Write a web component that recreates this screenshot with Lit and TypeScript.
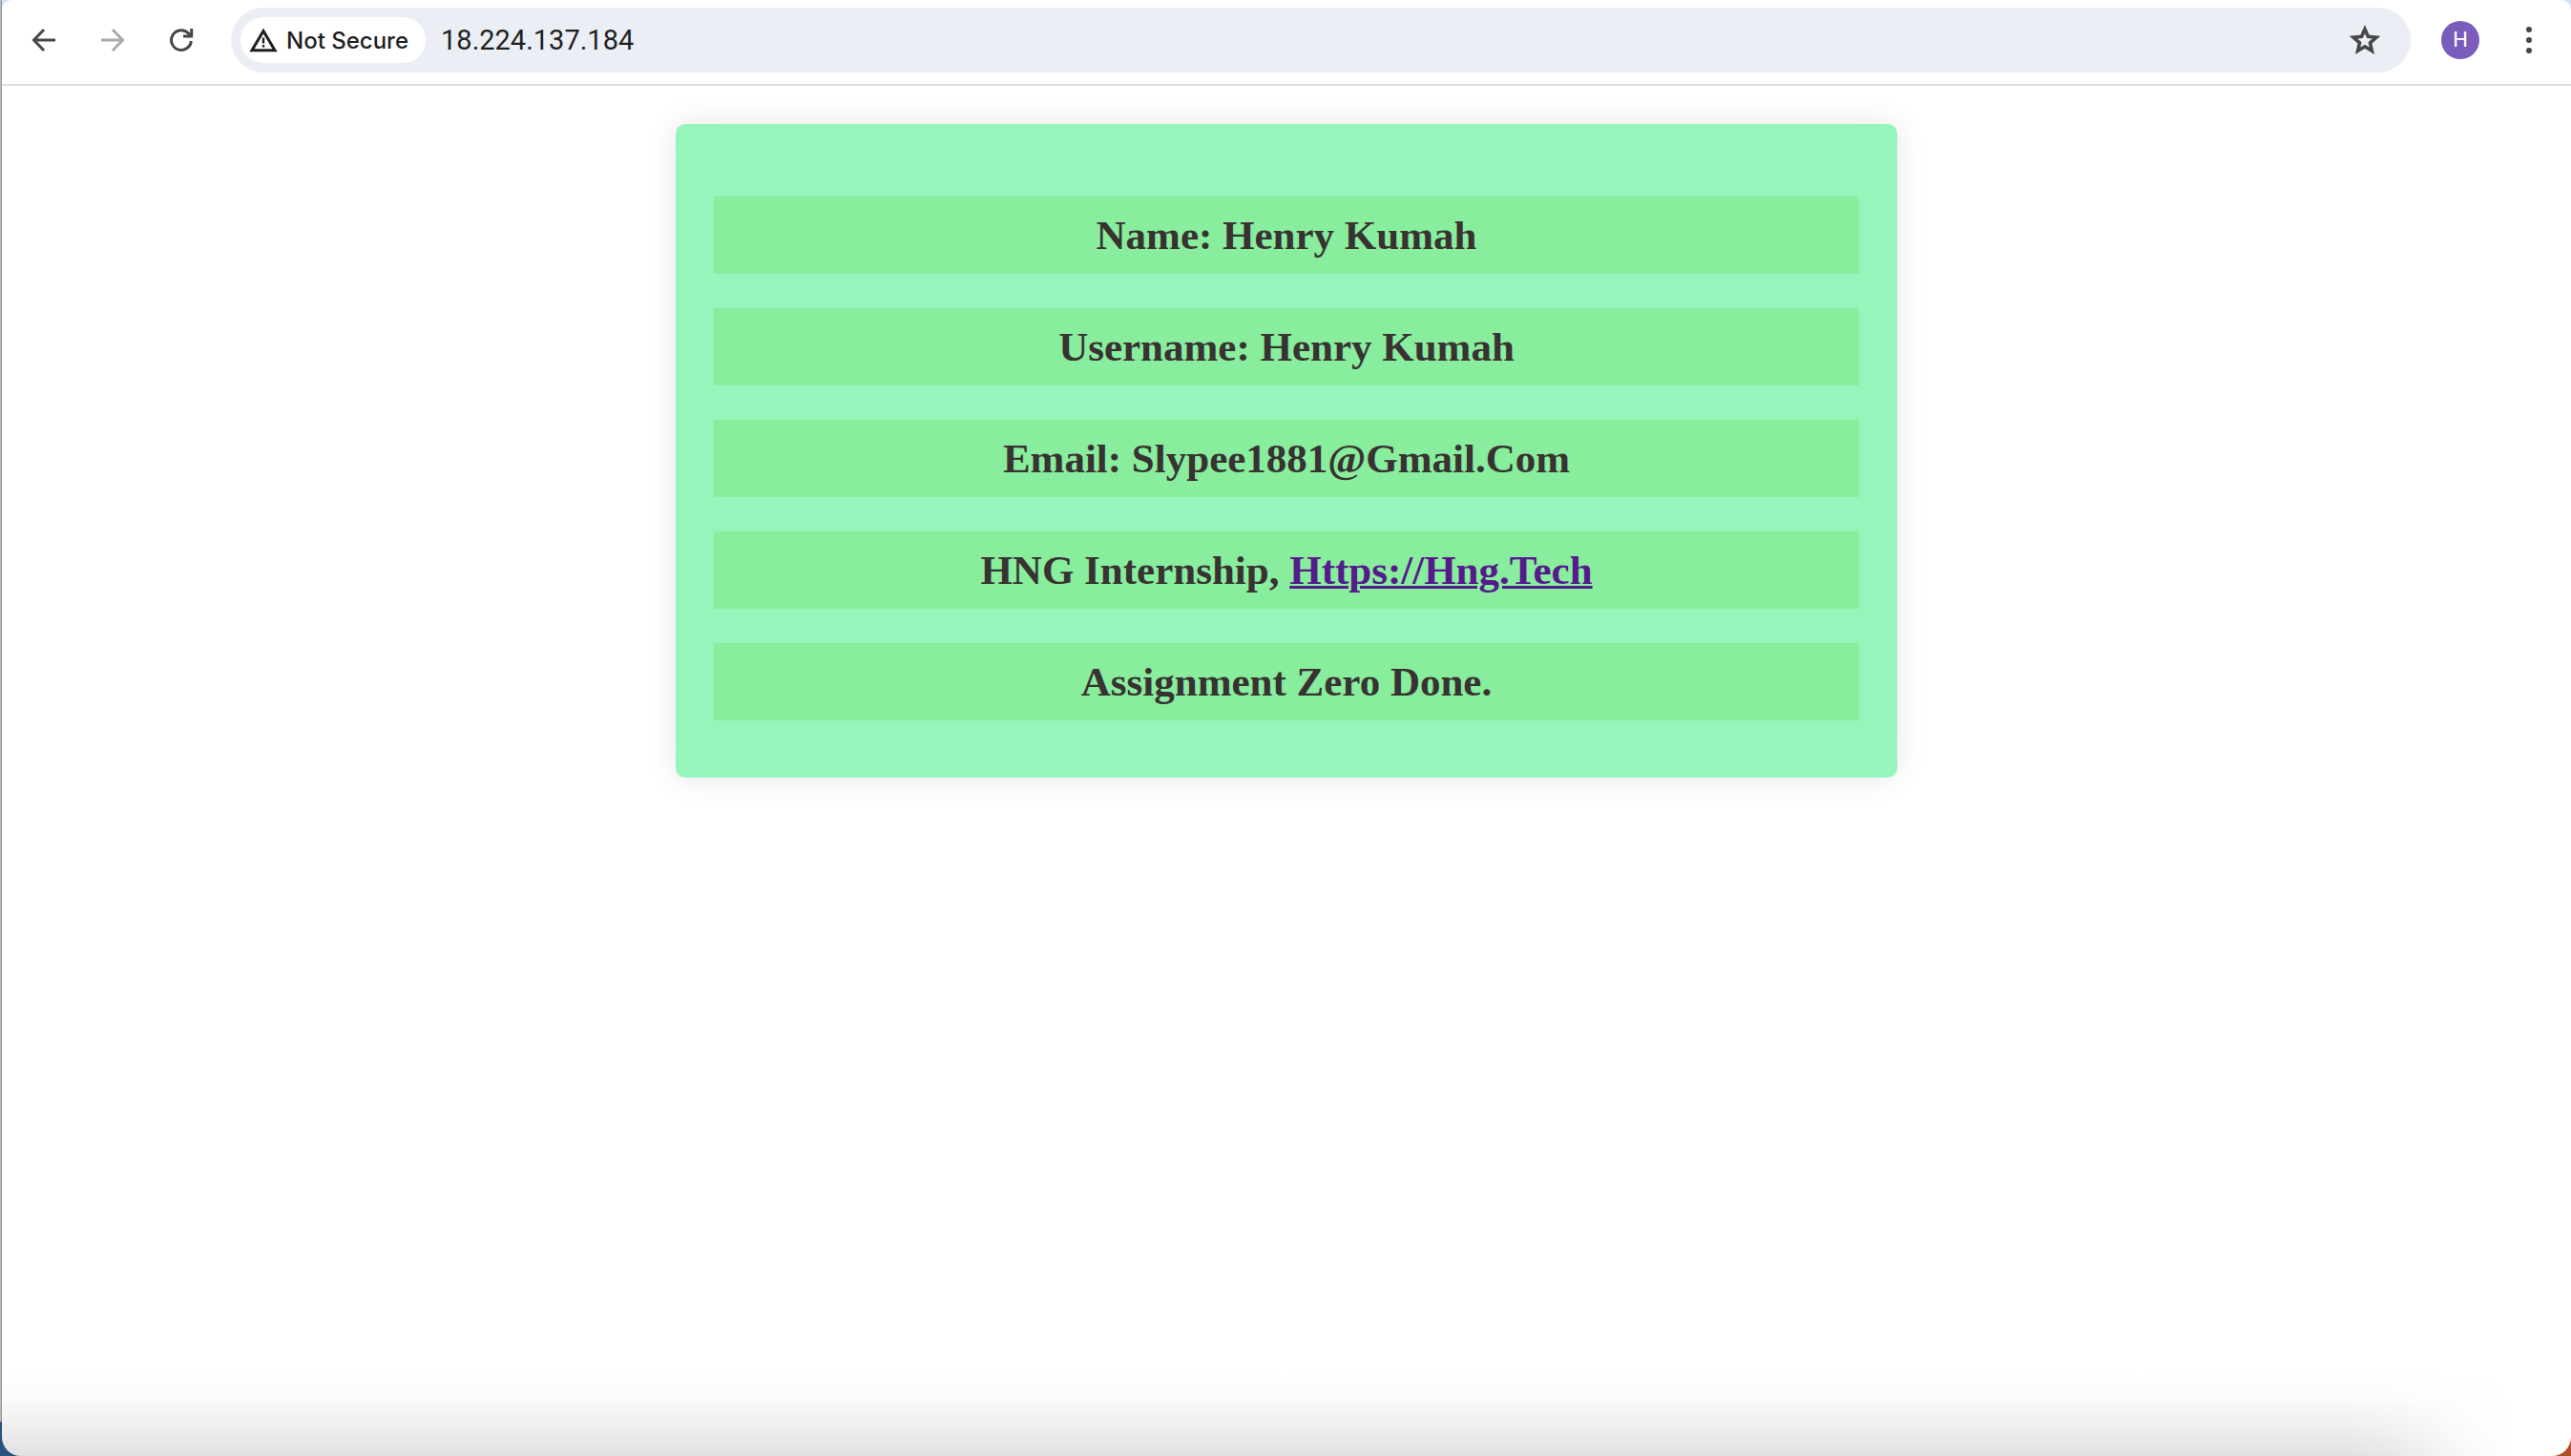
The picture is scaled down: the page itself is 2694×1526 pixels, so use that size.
import { LitElement, html, css } from "lit";
import { customElement } from "lit/decorators.js";

@customElement("browser-toolbar")
class BrowserToolbar extends LitElement {
  static styles = css`
    :host {
      display: block;
    }
    .bar {
      display: flex;
      align-items: center;
      height: 84px;
      padding: 0 20px 4px 20px;
      border-bottom: 2px solid #dfdfdf;
      font-family: Inter, "Liberation Sans", sans-serif;
    }
    button {
      all: unset;
      box-sizing: border-box;
      display: flex;
      align-items: center;
      justify-content: center;
      flex: none;
      width: 48px;
      height: 48px;
      color: #474747;
    }
    button:focus-visible {
      outline: 2px solid #7a5cba;
      border-radius: 24px;
    }
    svg {
      display: block;
      flex: none;
    }
    .nav {
      display: flex;
      gap: 24px;
      margin-right: 28px;
    }
    .nav button:disabled {
      color: #a9a9a9;
    }
    .omnibox {
      flex: 1;
      min-width: 0;
      display: flex;
      align-items: center;
      height: 68px;
      box-sizing: border-box;
      padding: 0 24px 0 10px;
      border-radius: 34px;
      background: #ebeef5;
    }
    .omnibox .chip {
      width: auto;
      gap: 9px;
      padding: 0 18px 0 9px;
      border-radius: 24px;
      background: #fff;
      color: #1f1f1f;
      font-size: 24px;
      font-weight: 500;
      white-space: nowrap;
    }
    .url {
      flex: 1;
      min-width: 0;
      margin: 0;
      padding: 0 16px;
      border: 0;
      outline: 0;
      background: transparent;
      color: #1f1f1f;
      font: 400 29px/40px Roboto, "Liberation Sans", sans-serif;
    }
    .profile {
      width: 40px;
      height: 40px;
      margin: 0 28px 0 32px;
      border-radius: 50%;
      background: #7a5cba;
      color: #fff;
      font: 400 22px/40px Roboto, sans-serif;
    }
  `;

  render() {
    return html`
      <header class="bar">
        <nav class="nav">
          <button aria-label="Back">
            <svg width="26" height="26" viewBox="0 0 26 26" fill="none" stroke="currentColor" stroke-width="3">
              <path d="M25 13H3M13 2L2.5 13L13 24" />
            </svg>
          </button>
          <button aria-label="Forward" disabled>
            <svg width="26" height="26" viewBox="0 0 26 26" fill="none" stroke="currentColor" stroke-width="3">
              <path d="M1 13H23M13 2L23.5 13L13 24" />
            </svg>
          </button>
          <button aria-label="Reload">
            <svg width="26" height="26" viewBox="0 0 26 26" fill="none" stroke="currentColor" stroke-width="3">
              <path d="M23.3 14A10.4 10.4 0 1 1 20.6 6L23 8.6M23.7 1V9H15" />
            </svg>
          </button>
        </nav>
        <div class="omnibox">
          <button class="chip">
            <svg width="30" height="26" viewBox="0 0 30 26" fill="none" stroke="currentColor">
              <path stroke-width="3" d="M15 3.5L27 23.7H3Z" />
              <path stroke-width="2.4" d="M15 10.5V16.5M15 18V20.5" />
            </svg>
            Not Secure
          </button>
          <input class="url" aria-label="Address" value="18.224.137.184" />
          <button aria-label="Bookmark this page">
            <svg width="34" height="32" viewBox="0 0 34 32" fill="none" stroke="currentColor" stroke-width="3.6">
              <path d="M17 4.5L20.4 12.3L29 13.1L22.5 18.8L24.4 27.2L17 22.8L9.6 27.2L11.5 18.8L5 13.1L13.6 12.3Z" />
            </svg>
          </button>
        </div>
        <button class="profile" aria-label="Profile">H</button>
        <button aria-label="Menu">
          <svg width="8" height="28" viewBox="0 0 8 28" fill="currentColor">
            <circle cx="4" cy="3" r="3" />
            <circle cx="4" cy="14" r="3" />
            <circle cx="4" cy="25" r="3" />
          </svg>
        </button>
      </header>
    `;
  }
}

@customElement("profile-card")
class ProfileCard extends LitElement {
  static styles = css`
    :host {
      display: block;
      padding: 40px;
    }
    .card {
      display: flex;
      flex-direction: column;
      gap: 36px;
      max-width: 1200px;
      margin: 0 auto;
      padding: 76px 40px 60px;
      border-radius: 10px;
      background: #96f5ba;
      box-shadow: 0 0 32px rgba(0, 0, 0, 0.1);
    }
    .row {
      margin: 0;
      padding: 20px;
      background: #88ed9d;
      color: #383232;
      font: 700 43px/41px Georgia, "Liberation Serif", serif;
      text-align: center;
    }
    a {
      color: #551a8b;
      text-decoration: underline;
      text-decoration-thickness: 3px;
    }
  `;

  render() {
    return html`
      <article class="card">
        <h2 class="row">Name: Henry Kumah</h2>
        <h2 class="row">Username: Henry Kumah</h2>
        <h2 class="row">Email: Slypee1881@Gmail.Com</h2>
        <h2 class="row">HNG Internship, <a href="https://hng.tech">Https://Hng.Tech</a></h2>
        <h2 class="row">Assignment Zero Done.</h2>
      </article>
    `;
  }
}

@customElement("app-root")
class AppRoot extends LitElement {
  static styles = css`
    :host {
      display: block;
    }
    .desktop {
      display: flex;
      min-height: 100vh;
      box-sizing: border-box;
      padding-left: 2px;
      background:
        linear-gradient(90deg, #2a527f 50%, #b04f27 50%) bottom / 100% 36px no-repeat,
        linear-gradient(#d3e0fb, #d3e0fb) top right / calc(100% - 2px) 36px no-repeat,
        linear-gradient(90deg, #b9b9b7 1px, #959593 1px);
    }
    .window {
      flex: 1;
      min-width: 0;
      border-radius: 10px 10px 20px 20px;
      overflow: hidden;
      background:
        linear-gradient(90deg, #fff0, #fff3 20%, #fffc 55%, #fff 75%) bottom right / 240px 88px no-repeat,
        linear-gradient(#fff0, #fbfbfb 30%, #eee 66%, #e1e1e1) bottom / 100% 88px no-repeat,
        #fff;
    }
  `;

  render() {
    return html`
      <div class="desktop">
        <div class="window">
          <browser-toolbar></browser-toolbar>
          <main><profile-card></profile-card></main>
        </div>
      </div>
    `;
  }
}
